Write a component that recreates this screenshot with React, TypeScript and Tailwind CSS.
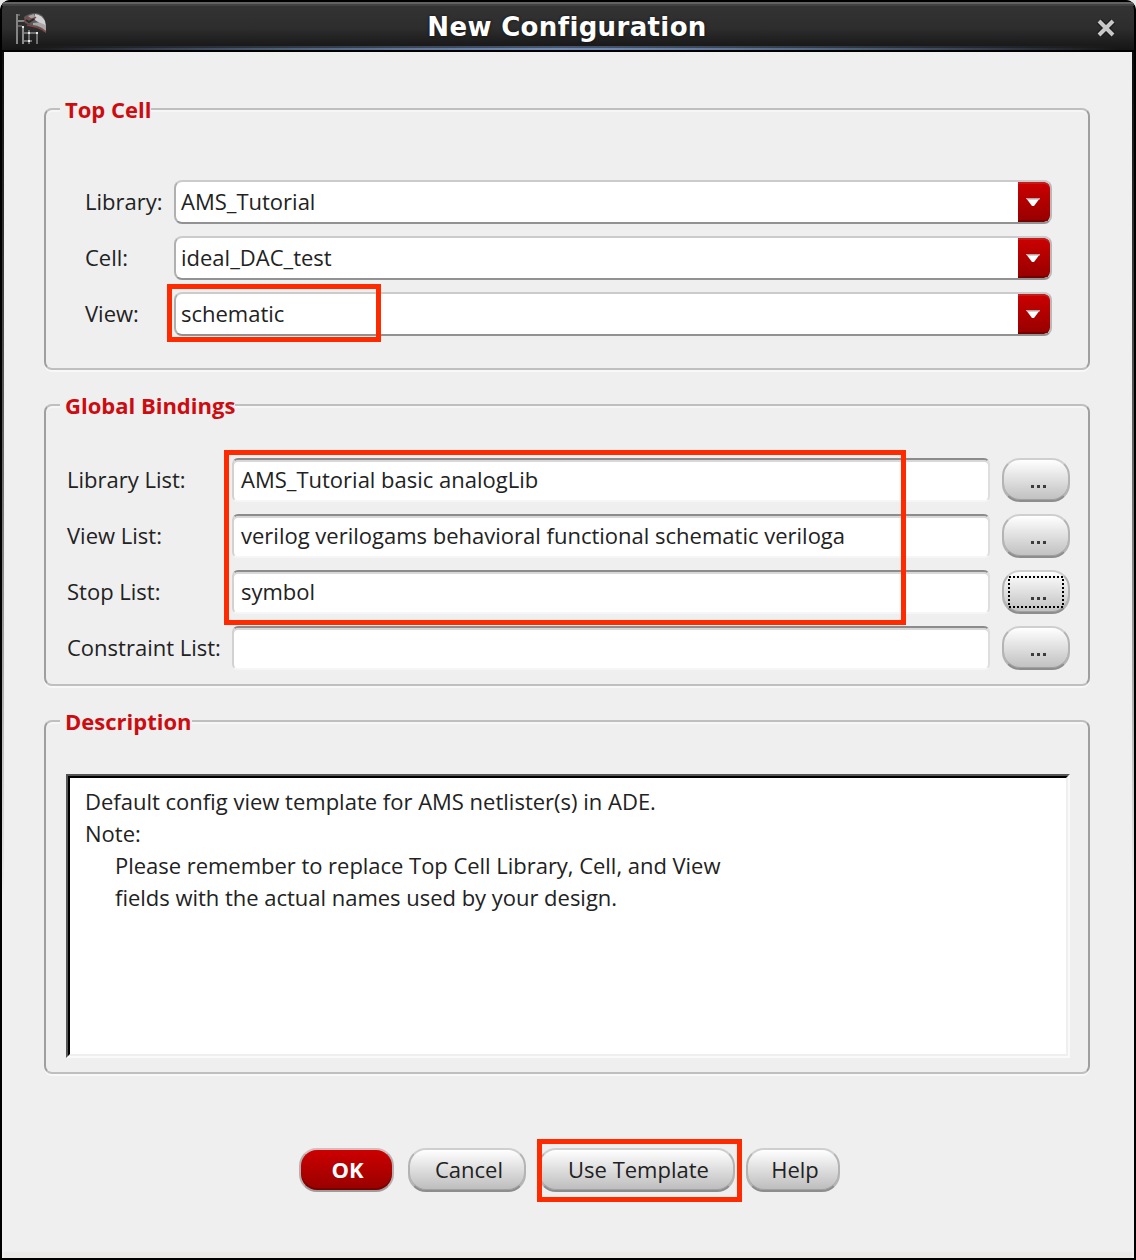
import type { ReactNode } from "react";

const textFont = "font-['Open_Sans','Noto_Sans',sans-serif]";

function AppIcon() {
  return (
    <svg className="h-8 w-8" viewBox="0 0 32 32" fill="none" shapeRendering="crispEdges">
      <path d="M0 2h2v30H0zM2 8h7v2H2z" fill="#858585" />
      <path d="M2 2h2v2H2zM2 13h4v2H2z" fill="#606060" />
      <path d="M6 14h2v18H6z" fill="#8c8c8c" />
      <path d="M8 20h14v2H8zM8 28h8v2H8zM12 18h2v14h-2zM20 20h2v12h-2z" fill="#707070" />
      <path d="M12 20h2v2h-2zM12 28h2v2h-2zM20 20h2v2h-2zM6 14h2v2H6z" fill="#e8e8e8" />
      <g shapeRendering="auto">
        <path d="M8 5Q13 1 20 1Q27 2 29 8L30 21L27 19Q25 15 19 15L9 11Z" fill="#5c5a5a" />
        <path d="M19 2Q26 3 29 9L30 14Q24 12 19 8Z" fill="#d0d0d0" />
        <path d="M12 4l6-2 1 3-5 2Z" fill="#a5a1a1" />
        <path d="M17 11Q25 9 30 14V19L26 16Q21 13 17 13Z" fill="#a8a6a6" />
        <path d="M8 10l4-5 5 3 3-3M11 13l9 2 7 3 3 2" stroke="#8a4646" strokeWidth="1.3" />
        <path d="M10 8l3 2 5-3" stroke="#2a2a2a" strokeWidth="2" />
      </g>
    </svg>
  );
}

function TitleBar() {
  return (
    <header className="relative flex h-[52px] shrink-0 items-start rounded-t-[10px] border-x-2 border-y-2 border-black bg-linear-to-b from-[#343434] via-[#2d2d2d] via-55% to-[#151515]">
      <div className="absolute inset-x-0 top-0 h-1 rounded-t-lg bg-linear-to-b from-[#626262] from-50% to-[#424242] to-50%" />
      <div className="absolute inset-x-4 bottom-0 h-1 bg-linear-to-r from-transparent via-[#49586f] to-transparent" />
      <div className="absolute inset-x-4 bottom-0 h-0.5 bg-linear-to-r from-transparent via-[#718db8] to-transparent" />
      <div className="mt-2.5 ml-3.5 h-8 w-8">
        <AppIcon />
      </div>
      <h1 className="mt-2 flex-1 text-center font-['DejaVu_Sans',sans-serif] text-[26px] leading-[34px] font-bold tracking-[0.36px] text-white [text-shadow:0_0_3px_#111]">
        New Configuration
      </h1>
      <svg className="mt-[17px] mr-[19px] ml-[11px] h-[18px] w-[18px]" viewBox="0 0 18 18">
        <path d="M2 2L16 16M16 2L2 16" stroke="#1a1a1a" strokeWidth="6.5" />
        <path d="M2 2L16 16M16 2L2 16" stroke="#c8c8c8" strokeWidth="4" />
      </svg>
    </header>
  );
}

function Group({ title, className, children }: { title: string; className: string; children: ReactNode }) {
  return (
    <section className={`relative rounded-lg border-2 border-x-[#9f9f9f] border-y-[#bfbfbf] shadow-[0_2px_0_#f8f8f8,inset_0_2px_0_#f6f6f6] ${className}`}>
      <h2 className="absolute -top-[18px] left-[14px] h-[34px] bg-[#efefef] pl-[5px] text-[22px] leading-[34px] font-bold whitespace-nowrap text-[#cc0c10]">
        {title}
      </h2>
      {children}
    </section>
  );
}

function Combo({ label, value }: { label: string; value: string }) {
  return (
    <div className="flex h-11 items-center">
      <label className="-mt-0.5 w-[89px] whitespace-nowrap">{label}</label>
      <div className="flex h-11 w-[878px] overflow-hidden rounded-lg border-2 border-t-[#cbcbcb] border-r-[#b9b9b9] border-b-[#929292] border-l-[#b0b0b0] bg-white">
        <span className="flex-1 pl-[5px] leading-[38px]">{value}</span>
        <span className="flex w-8 items-start justify-center rounded-r-md border-b-2 border-[#750000] bg-linear-to-b from-[#cc0000] to-[#990000] pt-4 pr-0.5 shadow-[inset_0_2px_0_#c81a1a]">
          <svg className="h-2 w-[14px]" viewBox="0 0 14 8">
            <path d="M0 0H14L8 8H6Z" fill="#fff" />
            <path d="M0 0H14V1.6H1Z" fill="#b9a4a4" />
          </svg>
        </span>
      </div>
    </div>
  );
}

function ListRow({ label, value, focused }: { label: string; value: string; focused?: boolean }) {
  return (
    <div className="flex h-11 items-center">
      <label className="-mt-0.5 w-[165px] whitespace-nowrap">{label}</label>
      <div className="h-11 w-[758px] rounded-md border-2 border-t-[#8c8c8c] border-r-[#dedede] border-b-[#f6f6f6] border-l-[#d2d2d2] bg-white pl-[7px] leading-[38px] whitespace-nowrap shadow-[inset_0_2px_0_#d8d8d8]">
        {value}
      </div>
      <button className="relative ml-3 h-11 w-[68px] rounded-[18px] border-2 border-t-[#cfcfcf] border-r-[#b4b4b4] border-b-[#8d8d8d] border-l-[#b4b4b4] bg-linear-to-b from-white to-[#c0c0c0] pl-1 shadow-[inset_0_-1px_0_#a0a0a0]">
        <span className="flex justify-center gap-[3px] pt-3">
          <i className="h-[3px] w-[3px] bg-[#3c3c3c]" />
          <i className="h-[3px] w-[3px] bg-[#3c3c3c]" />
          <i className="h-[3px] w-[3px] bg-[#3c3c3c]" />
        </span>
        {focused && (
          <svg className="absolute top-1 left-1 h-8 w-14" viewBox="0 0 56 32">
            <rect x="1" y="1" width="54" height="30" fill="none" stroke="#000" strokeWidth="2" strokeDasharray="2 2" />
          </svg>
        )}
      </button>
    </div>
  );
}

const plainButton =
  "h-11 rounded-[18px] border-2 border-t-[#cfcfcf] border-r-[#b4b4b4] border-b-[#8d8d8d] border-l-[#b4b4b4] bg-linear-to-b from-white to-[#bcbcbc] pb-0.5 leading-[38px] shadow-[inset_0_-1px_0_#a0a0a0] whitespace-nowrap";

export default function App() {
  return (
    <div className="bg-[#e9e9e9]">
      <div className={`flex h-[1260px] w-[1136px] flex-col overflow-hidden rounded-t-[10px] bg-black text-[22px] text-[#222] ${textFont}`}>
        <TitleBar />
        <div className="flex flex-1 border-x-2 border-b-2 border-black bg-linear-to-b from-[#0c0c0c] via-[#6b6b6b] via-35% to-[#efefef] to-70% px-0.5">
          <main className="flex w-[1128px] flex-col border-b-[6px] border-[#ebeae9] bg-[#efefef] px-10 pt-14">
            <Group title="Top Cell" className="h-[262px] w-[1046px] pt-[70px] pl-[38px]">
              <div className="flex flex-col gap-3 pl-px">
                <Combo label="Library:" value="AMS_Tutorial" />
                <Combo label="Cell:" value="ideal_DAC_test" />
                <div className="relative">
                  <Combo label="View:" value="schematic" />
                  <div className="absolute -top-2 left-[82px] h-[58px] w-[214px] border-[5px] border-[#ff2a00]" />
                </div>
              </div>
            </Group>

            <Group title="Global Bindings" className="mt-[34px] h-[282px] w-[1046px] pt-[52px] pl-[21px]">
              <div className="relative flex flex-col gap-3">
                <ListRow label="Library List:" value="AMS_Tutorial basic analogLib" />
                <ListRow label="View List:" value="verilog verilogams behavioral functional schematic veriloga" />
                <ListRow label="Stop List:" value="symbol" focused />
                <ListRow label="Constraint List:" value="" />
                <div className="absolute -top-2 left-[157px] h-[175px] w-[682px] border-[5px] border-[#ff2a00]" />
              </div>
            </Group>

            <Group title="Description" className="mt-[34px] h-[354px] w-[1046px] pt-[52px] pl-5">
              <div className="h-[284px] w-[1004px] border-2 border-t-[#555] border-r-[#fafafa] border-b-[#fafafa] border-l-[#555]">
                <div className="h-full border-2 border-t-black border-r-[#efefef] border-b-[#efefef] border-l-black bg-white pt-[7px] pl-[15px] leading-8 whitespace-nowrap">
                  <p>Default config view template for AMS netlister(s) in ADE.</p>
                  <p>Note:</p>
                  <p className="pl-[30px] tracking-[-0.03px]">Please remember to replace Top Cell Library, Cell, and View</p>
                  <p className="pl-[30px] tracking-[-0.02px]">fields with the actual names used by your design.</p>
                </div>
              </div>
            </Group>

            <footer className="mt-[74px] ml-[255px] flex">
              <button className="h-11 w-[95px] rounded-[18px] border-2 border-t-[#d4bcbc] border-r-[#b8b0b0] border-b-[#a09a9a] border-l-[#b8b0b0] bg-linear-to-b from-[#cc0000] to-[#980000] pb-0.5 pl-0.5 leading-[38px] font-bold text-white shadow-[inset_0_-2px_0_#750000]">
                OK
              </button>
              <button className={`ml-3.5 w-[118px] pl-1 ${plainButton}`}>Cancel</button>
              <div className="relative ml-3 flex">
                <button className={`w-[197px] pl-1 ${plainButton}`}>Use Template</button>
                <div className="absolute -top-[9px] -left-px h-[63px] w-[205px] border-[5px] border-[#ff2a00]" />
              </div>
              <button className={`ml-[11px] w-[94px] pl-1 ${plainButton}`}>Help</button>
            </footer>
          </main>
        </div>
      </div>
    </div>
  );
}
